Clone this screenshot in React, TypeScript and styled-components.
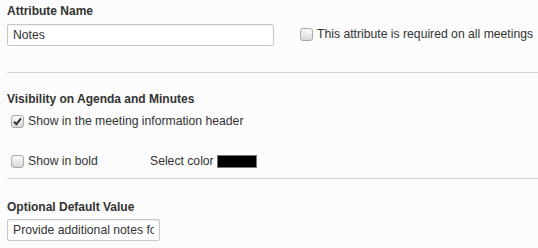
import React from 'react';
import styled, { createGlobalStyle } from 'styled-components';

const GlobalStyle = createGlobalStyle`
	html, body {
		margin: 0;
		padding: 0;
		background: #fbfcfb;
	}
	body {
		font-family: 'Liberation Sans', Arial, sans-serif;
		font-size: 12px;
		color: #333;
	}
`;

const Page = styled.div`
	display: flex;
	flex-direction: column;
	padding: 3px 0 0 7px;
	width: 531px;
`;

const FieldRow = styled.div`
	display: flex;
	align-items: flex-end;
	gap: 26px;
`;

const Field = styled.div<{ $gap?: number }>`
	display: flex;
	flex-direction: column;
	gap: ${(p) => p.$gap ?? 5}px;
`;

const Label = styled.div`
	font-weight: bold;
	line-height: 16px;
	color: #333;
`;

const TextInput = styled.input<{ $width: number }>`
	box-sizing: border-box;
	width: ${(p) => p.$width}px;
	height: 22px;
	margin: 0;
	padding: 0 5px;
	border: 1px solid #c8c8c8;
	border-radius: 2px;
	background: #fff;
	box-shadow: inset 0 1px 2px rgba(0, 0, 0, 0.08);
	font-family: 'Liberation Sans', Arial, sans-serif;
	font-size: 12.2px;
	color: #333;
	outline: none;
`;

const Divider = styled.div<{ $top: number; $bottom: number }>`
	height: 1px;
	background: #cfcfcf;
	margin-top: ${(p) => p.$top}px;
	margin-bottom: ${(p) => p.$bottom}px;
`;

const OptionRow = styled.div<{ $top: number }>`
	display: flex;
	align-items: center;
	height: 20px;
	margin-top: ${(p) => p.$top}px;
	padding-left: 4px;
`;

const Option = styled.label<{ $width?: number; $bottom?: number }>`
	display: flex;
	align-items: center;
	gap: 4px;
	font-size: 12.2px;
	line-height: 16px;
	color: #333;
	margin-bottom: ${(p) => p.$bottom ?? 0}px;
	${(p) => (p.$width ? `width: ${p.$width}px;` : '')}
`;

const CheckBox = styled.span`
	box-sizing: border-box;
	width: 13px;
	height: 13px;
	display: flex;
	align-items: center;
	justify-content: center;
	border: 1px solid #a9a9a9;
	border-radius: 3px;
	background: linear-gradient(180deg, #fafafa 0%, #d8d8d8 100%);
	flex-shrink: 0;

	svg {
		width: 9px;
		height: 9px;
	}
`;

const ColorPicker = styled.div`
	display: flex;
	align-items: center;
	gap: 3px;
	font-size: 12.2px;
	line-height: 16px;
`;

const Swatch = styled.span<{ $color: string }>`
	box-sizing: border-box;
	width: 40px;
	height: 13px;
	background: ${(p) => p.$color};
	border: 1px solid #777;
`;

const Check = ({ checked }: { checked?: boolean }) => (
	<CheckBox>
		{checked && (
			<svg viewBox="0 0 9 9">
				<path d="M1 4.6 L3.4 7.2 L8 1.4" fill="none" stroke="#333" strokeWidth="1.9" />
			</svg>
		)}
	</CheckBox>
);

const App = () => (
	<>
		<GlobalStyle />
		<Page>
			<FieldRow>
				<Field>
					<Label>Attribute Name</Label>
					<TextInput $width={267} defaultValue="Notes" />
				</Field>
				<Option $bottom={4}>
					<Check />
					This attribute is required on all meetings
				</Option>
			</FieldRow>

			<Divider $top={26} $bottom={18} />

			<Label>Visibility on Agenda and Minutes</Label>
			<OptionRow $top={4}>
				<Option>
					<Check checked />
					Show in the meeting information header
				</Option>
			</OptionRow>
			<OptionRow $top={20}>
				<Option $width={139}>
					<Check />
					Show in bold
				</Option>
				<ColorPicker>
					Select color
					<Swatch $color="#000" />
				</ColorPicker>
			</OptionRow>

			<Divider $top={7} $bottom={20} />

			<Field $gap={4}>
				<Label>Optional Default Value</Label>
				<TextInput $width={153} defaultValue="Provide additional notes for this meeting" />
			</Field>
		</Page>
	</>
);

export default App;
